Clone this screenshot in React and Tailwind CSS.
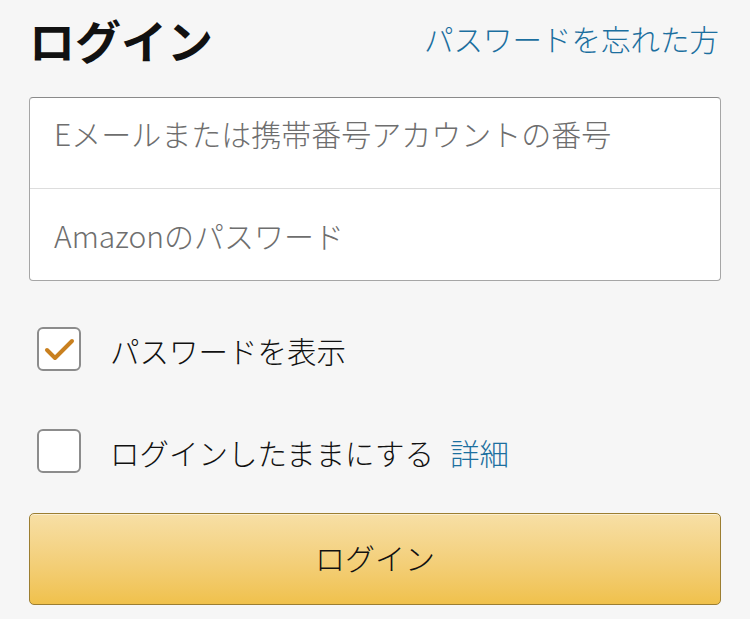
import React, { useState } from 'react';

const font = { fontFamily: '"Noto Sans CJK JP", "Noto Sans", sans-serif' };

const CheckBox = ({ checked, onChange }) => (
  <button
    type="button"
    onClick={onChange}
    className="w-[44px] h-[44px] shrink-0 rounded-[6px] border-2 border-[#8c8c8c] bg-white flex items-center justify-center"
  >
    {checked && (
      <svg width="44" height="44" viewBox="0 0 44 44" className="-m-[2px]">
        <path
          d="M10 23 L18 31 L35 14"
          fill="none"
          stroke="#c9801f"
          strokeWidth="4"
          strokeLinecap="round"
          strokeLinejoin="round"
        />
      </svg>
    )}
  </button>
);

const App = () => {
  const [showPw, setShowPw] = useState(true);
  const [keep, setKeep] = useState(false);

  return (
    <div className="min-h-[619px] bg-[#f6f6f6] px-[29px]" style={font}>
      {/* header */}
      <div className="h-[78px] flex items-center justify-between">
        <h1 className="text-[46px] font-bold text-[#111] leading-none">ログイン</h1>
        <a href="#" className="text-[29.5px] font-light text-[#1c6f9f] leading-none mr-[2px]">パスワードを忘れた方</a>
      </div>

      {/* inputs */}
      <div className="mt-[19px] border border-[#a6a6a6] border-t-[#8a8a8a] rounded-[4px] bg-white">
        <div className="h-[91px] flex items-center px-[24px] border-b border-[#dddddd]">
          <span className="text-[30px] font-light text-[#6e6e6e] leading-none -mt-[20px]">Eメールまたは携帯番号アカウントの番号</span>
        </div>
        <div className="h-[91px] flex items-center px-[24px]">
          <span className="text-[30px] font-light text-[#6e6e6e] leading-none">Amazonのパスワード</span>
        </div>
      </div>

      {/* options */}
      <div className="mt-[46px] ml-[8px] flex items-center gap-[29px]">
        <CheckBox checked={showPw} onChange={() => setShowPw(!showPw)} />
        <span className="text-[29.5px] font-light text-[#111] leading-none mt-[4px]">パスワードを表示</span>
      </div>
      <div className="mt-[58px] ml-[8px] flex items-center gap-[29px]">
        <CheckBox checked={keep} onChange={() => setKeep(!keep)} />
        <span className="text-[29.5px] font-light text-[#111] leading-none mt-[4px]">
          ログインしたままにする
          <a href="#" className="text-[#1c6f9f] ml-[16px]">詳細</a>
        </span>
      </div>

      {/* submit */}
      <button
        type="button"
        className="mt-[40px] w-full h-[92px] rounded-[5px] border border-[#9c7e31] bg-gradient-to-b from-[#f7dfa5] to-[#f0c14b] shadow-[inset_0_1px_0_rgba(255,255,255,0.5)] flex items-center justify-center"
      >
        <span className="text-[30px] font-light text-[#111] leading-none -mt-[4px]">ログイン</span>
      </button>
    </div>
  );
};

export default App;
